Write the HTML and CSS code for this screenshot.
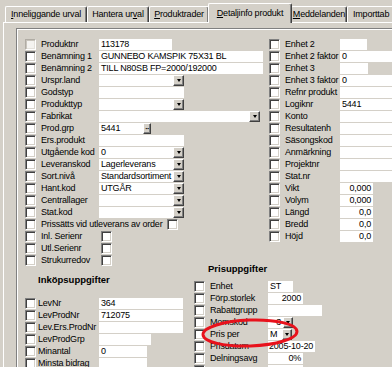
FILE: index.html
```html
<!DOCTYPE html>
<html>
  <head>
    <meta charset="utf-8">
    <title>Detaljinfo produkt</title>
    <link rel="stylesheet" href="styles.css">
  </head>
  <body>

    <div class="tabbar">
      <div class="tab t1"><u>I</u>nneliggande urval</div>
      <div class="tab t2">Hantera ur<u>v</u>al</div>
      <div class="tab t3"><u>P</u>roduktrader</div>
      <div class="tab t4 active"><u>D</u>etaljinfo produkt</div>
      <div class="tab t5"><u>M</u>eddelanden</div>
      <div class="tab t6">Importtab</div>
    </div>

    <div class="panel">
      <div class="group">
        <div class="form">

          <div class="col-a">
            <div class="row"><span class="cb dis"></span><span class="lbl">Produktnr</span><span class="fld w73">113178</span></div>
            <div class="row"><span class="cb"></span><span class="lbl">Benämning 1</span><span class="fld w164">GUNNEBO KAMSPIK 75X31 BL</span></div>
            <div class="row"><span class="cb"></span><span class="lbl">Benämning 2</span><span class="fld w164">TILL N80SB FP=2000/192000</span></div>
            <div class="row"><span class="cb"></span><span class="lbl">Urspr.land</span><span class="sel w85"><span class="v"></span><span class="btn"></span></span></div>
            <div class="row"><span class="cb"></span><span class="lbl">Godstyp</span><span class="fld w85"></span></div>
            <div class="row"><span class="cb"></span><span class="lbl">Produkttyp</span><span class="sel w85"><span class="v"></span><span class="btn"></span></span></div>
            <div class="row"><span class="cb"></span><span class="lbl">Fabrikat</span><span class="sel w161"><span class="v"></span><span class="btn"></span></span></div>
            <div class="row"><span class="cb"></span><span class="lbl">Prod.grp</span><span class="fld w44">5441</span><span class="btn dots">··</span></div>
            <div class="row"><span class="cb"></span><span class="lbl">Ers.produkt</span><span class="fld w85"></span></div>
            <div class="row"><span class="cb"></span><span class="lbl">Utgående kod</span><span class="sel w85"><span class="v">0</span><span class="btn"></span></span></div>
            <div class="row"><span class="cb"></span><span class="lbl">Leveranskod</span><span class="sel w85"><span class="v">Lagerleverans</span><span class="btn"></span></span></div>
            <div class="row"><span class="cb"></span><span class="lbl">Sort.nivå</span><span class="sel w85"><span class="v">Standardsortiment</span><span class="btn"></span></span></div>
            <div class="row"><span class="cb"></span><span class="lbl">Hant.kod</span><span class="sel w85"><span class="v">UTGÅR</span><span class="btn"></span></span></div>
            <div class="row"><span class="cb"></span><span class="lbl">Centrallager</span><span class="sel w85"><span class="v"></span><span class="btn"></span></span></div>
            <div class="row"><span class="cb"></span><span class="lbl">Stat.kod</span><span class="sel w85"><span class="v"></span><span class="btn"></span></span></div>
            <div class="row"><span class="cb"></span><span class="lbl auto">Prissätts vid utleverans av order</span><span class="cb after"></span></div>
            <div class="row"><span class="cb"></span><span class="lbl">Inl. Serienr</span><span class="cb inner"></span></div>
            <div class="row"><span class="cb"></span><span class="lbl">Utl.Serienr</span><span class="cb inner"></span></div>
            <div class="row"><span class="cb"></span><span class="lbl">Strukurredov</span><span class="cb inner"></span></div>
          </div>

          <div class="col-b">
            <div class="row"><span class="cb"></span><span class="lbl">Enhet 2</span><span class="fld w27"></span></div>
            <div class="row"><span class="cb"></span><span class="lbl">Enhet 2 faktor</span><span class="fld wide">0</span></div>
            <div class="row"><span class="cb"></span><span class="lbl">Enhet 3</span><span class="fld w28"></span></div>
            <div class="row"><span class="cb"></span><span class="lbl">Enhet 3 faktor</span><span class="fld wide">0</span></div>
            <div class="row"><span class="cb"></span><span class="lbl">Refnr produkt</span><span class="fld wide"></span></div>
            <div class="row"><span class="cb"></span><span class="lbl">Logiknr</span><span class="fld wide">5441</span></div>
            <div class="row"><span class="cb"></span><span class="lbl">Konto</span><span class="fld wide"></span></div>
            <div class="row"><span class="cb"></span><span class="lbl">Resultatenh</span><span class="fld wide"></span></div>
            <div class="row"><span class="cb"></span><span class="lbl">Säsongskod</span><span class="fld wide"></span></div>
            <div class="row"><span class="cb"></span><span class="lbl">Anmärkning</span><span class="fld wide"></span></div>
            <div class="row"><span class="cb"></span><span class="lbl">Projektnr</span><span class="fld wide"></span></div>
            <div class="row"><span class="cb"></span><span class="lbl">Stat.nr</span><span class="fld wide"></span></div>
            <div class="row"><span class="cb"></span><span class="lbl">Vikt</span><span class="fld w33 r">0,000</span></div>
            <div class="row"><span class="cb"></span><span class="lbl">Volym</span><span class="fld w33 r">0,000</span></div>
            <div class="row"><span class="cb"></span><span class="lbl">Längd</span><span class="fld w33 r">0,0</span></div>
            <div class="row"><span class="cb"></span><span class="lbl">Bredd</span><span class="fld w33 r">0,0</span></div>
            <div class="row"><span class="cb"></span><span class="lbl">Höjd</span><span class="fld w33 r">0,0</span></div>
          </div>

          <div class="inkop">
            <div class="head">Inköpsuppgifter</div>
            <div class="row"><span class="cb"></span><span class="lbl">LevNr</span><span class="fld w84">364</span></div>
            <div class="row"><span class="cb"></span><span class="lbl">LevProdNr</span><span class="fld w84">712075</span></div>
            <div class="row"><span class="cb"></span><span class="lbl">Lev.Ers.ProdNr</span><span class="fld w84"></span></div>
            <div class="row"><span class="cb"></span><span class="lbl">LevProdGrp</span><span class="fld w52"></span></div>
            <div class="row"><span class="cb"></span><span class="lbl">Minantal</span><span class="fld w48">0</span></div>
            <div class="row"><span class="cb"></span><span class="lbl">Minsta bidrag</span><span class="fld w48"></span></div>
          </div>

          <div class="pris">
            <div class="head">Prisuppgifter</div>
            <div class="row"><span class="cb"></span><span class="lbl">Enhet</span><span class="fld w25">ST</span></div>
            <div class="row"><span class="cb"></span><span class="lbl">Förp.storlek</span><span class="fld w35 r">2000</span></div>
            <div class="row"><span class="cb"></span><span class="lbl">Rabattgrupp</span><span class="fld w54"></span></div>
            <div class="row"><span class="cb"></span><span class="lbl">Momskod</span><span class="sel w25"><span class="v r">3</span><span class="btn sm"></span></span></div>
            <div class="row"><span class="cb"></span><span class="lbl">Pris per</span><span class="sel w24"><span class="v">M</span><span class="btn sm"></span></span></div>
            <div class="row"><span class="cb"></span><span class="lbl">Prisdatum</span><span class="fld w47 tight">2005-10-20</span></div>
            <div class="row"><span class="cb"></span><span class="lbl">Delningsavg</span><span class="fld w35 r">0%</span></div>
            <div class="row"><span class="cb"></span><span class="lbl"></span><span class="fld w35"></span></div>

            <svg class="ring" viewBox="0 0 98 30">
              <ellipse cx="49" cy="15" rx="47" ry="13" transform="rotate(-2 49 15)" />
            </svg>
          </div>

        </div>
      </div>
    </div>

  </body>
</html>
```

FILE: styles.css
```css
html, body{
  margin: 0;
  overflow: hidden;
}
body{
  width: 392px;
  height: 367px;
  background: #d4d0c8;
  color: #000;
  font-family: "Liberation Sans", Arial, sans-serif;
  font-size: 9px;
  letter-spacing: -0.2px;
}

/* tabs */
.tabbar{
  display: flex;
  align-items: flex-end;
  height: 22px;
  padding-left: 5px;
}
.tab{
  flex: none;
  box-sizing: border-box;
  height: 16px;
  line-height: 15px;
  text-align: center;
  white-space: nowrap;
  border-top: 1px solid #fff;
  border-left: 1px solid #fff;
  border-right: 1px solid #404040;
  box-shadow: inset -1px 0 #808080;
  border-radius: 2px 2px 0 0;
}
.t1{ width: 82px; }
.t2{ width: 62px; }
.t3{ width: 60px; }
.t4{ width: 84px; }
.t5{ width: 56px; }
.t6{ width: 50px; text-align: left; padding-left: 5px; overflow: hidden; }
.tab.active{
  height: 20px;
  line-height: 18px;
  margin: 0 -1px -1px -1px;
  position: relative;
  z-index: 1;
  background: #d4d0c8;
}

/* panel + group box */
.panel{
  margin-left: 3px;
  border-left: 1px solid #fff;
  border-top: 1px solid #fff;
  padding: 5px 0 0 12px;
  height: 400px;
}
.group{
  border-top: 1px solid #808080;
  border-left: 1px solid #808080;
  box-shadow: inset 1px 1px #fff;
  padding: 9px 0 0 8px;
  height: 400px;
}

.form{
  display: grid;
  grid-template-columns: 169px 75px 200px;
  align-items: start;
}
.col-a{ grid-column: 1 / 3; grid-row: 1; }
.col-b{ grid-column: 3; grid-row: 1; }
.inkop{ grid-column: 1; grid-row: 2; padding-top: 9px; }
.pris{ grid-column: 2 / 4; grid-row: 2; margin-top: -2px; position: relative; }

.head{
  font-weight: bold;
  font-size: 9.5px;
  letter-spacing: 0;
  line-height: 10px;
}
.inkop .head{ padding-left: 13px; margin-bottom: 12px; }
.pris .head{ padding-left: 14px; margin-bottom: 6px; }

/* rows */
.row{
  display: flex;
  align-items: center;
  height: 12px;
}
.lbl{
  flex: none;
  width: 58px;
  white-space: nowrap;
}
.lbl.auto{ width: auto; }
.col-b .lbl{ width: 55px; }
.inkop .lbl{ width: 61px; }
.inkop .cb{ margin-right: 2px; }

.cb{
  flex: none;
  box-sizing: border-box;
  width: 11px;
  height: 11px;
  margin-right: 5px;
  background: #fff;
  border: 1px solid;
  border-color: #808080 #fff #fff #808080;
  box-shadow: inset 1px 1px #404040, inset -1px -1px #d4d0c8;
}
.cb.dis{
  background: #f4f3f0;
  border-color: #b0aca4 #fff #fff #b0aca4;
  box-shadow: inset 1px 1px #c8c4bc, inset -1px -1px #e4e2dc;
}
.cb.after{ margin-left: 5px; }
.cb.inner{ margin-left: 2px; }

.fld{
  flex: none;
  box-sizing: border-box;
  height: 11px;
  line-height: 11px;
  padding: 0 2px;
  background: #fff;
  white-space: nowrap;
  overflow: hidden;
}
.fld.tight{ padding: 0 1px; }
.r{ text-align: right; }

.sel{
  flex: none;
  display: flex;
  height: 11px;
  background: #fff;
}
.sel .v{
  flex: 1;
  padding: 0 2px;
  line-height: 11px;
  white-space: nowrap;
  overflow: hidden;
}
.btn{
  flex: none;
  box-sizing: border-box;
  width: 11px;
  height: 11px;
  display: flex;
  align-items: center;
  justify-content: center;
  background: #d4d0c8;
  border: 1px solid;
  border-color: #fff #404040 #404040 #fff;
  box-shadow: inset -1px -1px #808080;
}
.btn::after{
  content: "";
  border-left: 2.5px solid transparent;
  border-right: 2.5px solid transparent;
  border-top: 3px solid #000;
}
.btn.sm{ width: 10px; }
.btn.dots{
  width: 8px;
  font-size: 8px;
  font-weight: bold;
  letter-spacing: -1px;
  line-height: 9px;
}
.btn.dots::after{ display: none; }

.w24{ width: 24px; }
.w25{ width: 25px; }
.w27{ width: 27px; }
.w28{ width: 28px; }
.w33{ width: 33px; }
.w35{ width: 35px; }
.w44{ width: 44px; }
.w47{ width: 47px; }
.w48{ width: 48px; }
.w52{ width: 52px; }
.w54{ width: 54px; }
.w73{ width: 73px; }
.w84{ width: 84px; }
.w85{ width: 85px; }
.w161{ width: 161px; }
.w164{ width: 164px; }
.wide{ width: 52px; }

/* red highlight around "Pris per" */
.ring{
  position: absolute;
  left: 7px;
  top: 54px;
  width: 98px;
  height: 30px;
  overflow: visible;
  pointer-events: none;
}
.ring ellipse{
  fill: none;
  stroke: #e8121c;
  stroke-width: 3;
}
```
